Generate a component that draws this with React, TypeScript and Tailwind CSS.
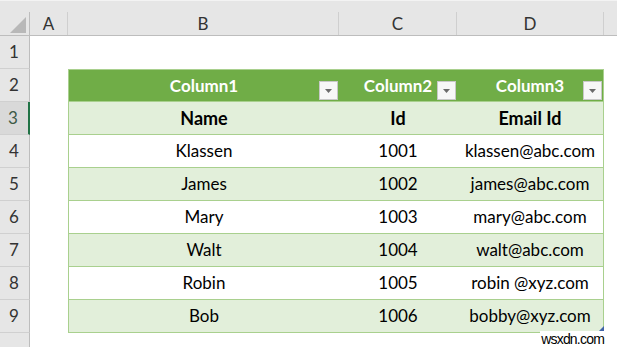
import React from "react";

type Row = { name: string; id: string; email: string };

const rows: Row[] = [
  { name: "Klassen", id: "1001", email: "klassen@abc.com" },
  { name: "James",   id: "1002", email: "james@abc.com" },
  { name: "Mary",    id: "1003", email: "mary@abc.com" },
  { name: "Walt",    id: "1004", email: "walt@abc.com" },
  { name: "Robin",   id: "1005", email: "robin @xyz.com" },
  { name: "Bob",     id: "1006", email: "bobby@xyz.com" },
];

const rowNums = [1, 2, 3, 4, 5, 6, 7, 8, 9];

function FilterButton() {
  return (
    <div className="absolute right-[1px] bottom-[1px] w-[19px] h-[19px] bg-[#f7f7f7] border border-[#c8c8c8] flex items-center justify-center">
      <svg width="7" height="4" viewBox="0 0 7 4">
        <path d="M0 0 L7 0 L3.5 4 Z" fill="#6b6b6b" />
      </svg>
    </div>
  );
}

export default function App() {
  return (
    <div className="relative w-[617px] h-[347px] overflow-hidden bg-white font-['Lato','Open_Sans',sans-serif] text-black">
      {/* strip above headers */}
      <div className="h-[12px] bg-[#e6e6e6] border-t border-[#f3f3f3]" />

      {/* column headers */}
      <div className="flex h-[24px] bg-[#e6e6e6] border-b border-[#bdbdbd] text-[17px] text-[#333] leading-[23px]">
        <div className="w-[30px] shrink-0 border-r border-[#bdbdbd] relative">
          <svg width="30" height="23" viewBox="0 0 30 23" className="block">
            <path d="M10 21 L26 5 L26 21 Z" fill="#b8b8b8" />
          </svg>
        </div>
        <div className="w-[38px] shrink-0 border-r border-[#cfcfcf] text-center">A</div>
        <div className="w-[271px] shrink-0 border-r border-[#cfcfcf] text-center">B</div>
        <div className="w-[118px] shrink-0 border-r border-[#cfcfcf] text-center">C</div>
        <div className="w-[147px] shrink-0 border-r border-[#cfcfcf] text-center">D</div>
        <div className="flex-1" />
      </div>

      {/* body */}
      <div className="flex">
        {/* row headers */}
        <div className="w-[30px] shrink-0 flex flex-col bg-[#e6e6e6] text-[17px] text-[#333]">
          {rowNums.map((n) => (
            <div
              key={n}
              className={
                n === 3
                  ? "h-[33px] border-b border-[#d0d0d0] border-r-2 border-r-[#217346] bg-[#d9d9d9] flex items-end justify-center pb-[4px] pr-[2px] text-[#3c5a47]"
                  : "h-[33px] border-b border-[#d0d0d0] border-r border-r-[#bdbdbd] flex items-end justify-center pb-[4px] pr-[1px]"
              }
            >
              {n}
            </div>
          ))}
          <div className="h-[20px] border-r border-[#bdbdbd]" />
        </div>

        {/* sheet */}
        <div className="flex-1 pl-[38px] pt-[33px]">
          <div className="relative w-[536px] border-x border-t border-[#a9d08e] text-[17px]">
            {/* header row */}
            <div className="grid grid-cols-[270px_118px_146px] h-[32px] bg-[#70ad47] text-white font-bold border-b border-[#a9d08e]">
              {["Column1", "Column2", "Column3"].map((c) => (
                <div key={c} className="relative flex items-center justify-center">
                  {c}
                  <FilterButton />
                </div>
              ))}
            </div>
            {/* field names */}
            <div className="grid grid-cols-[270px_118px_146px] h-[33px] bg-[#e2efda] font-bold border-b border-[#a9d08e] text-[18px]">
              <div className="flex items-center justify-center">Name</div>
              <div className="flex items-center justify-center">Id</div>
              <div className="flex items-center justify-center">Email Id</div>
            </div>
            {rows.map((r, i) => (
              <div
                key={r.id}
                className={
                  i % 2 === 0
                    ? "grid grid-cols-[270px_118px_146px] h-[33px] bg-white border-b border-[#a9d08e]"
                    : "grid grid-cols-[270px_118px_146px] h-[33px] bg-[#e2efda] border-b border-[#a9d08e]"
                }
              >
                <div className="flex items-center justify-center">{r.name}</div>
                <div className="flex items-center justify-center">{r.id}</div>
                <div className="flex items-center justify-center">{r.email}</div>
              </div>
            ))}
            {/* resize handle */}
            <svg width="7" height="7" viewBox="0 0 7 7" className="absolute right-[-1px] bottom-[0px]">
              <path d="M7 0 L7 7 L0 7 Z" fill="#3f63a8" />
            </svg>
          </div>
        </div>
      </div>

      {/* watermark */}
      <div className="absolute right-[12px] bottom-[0px] text-[14px] leading-[16px] tracking-[-0.8px] font-['Liberation_Sans',Arial,sans-serif] text-black bg-white px-[1px]">
        wsxdn.com
      </div>
    </div>
  );
}
